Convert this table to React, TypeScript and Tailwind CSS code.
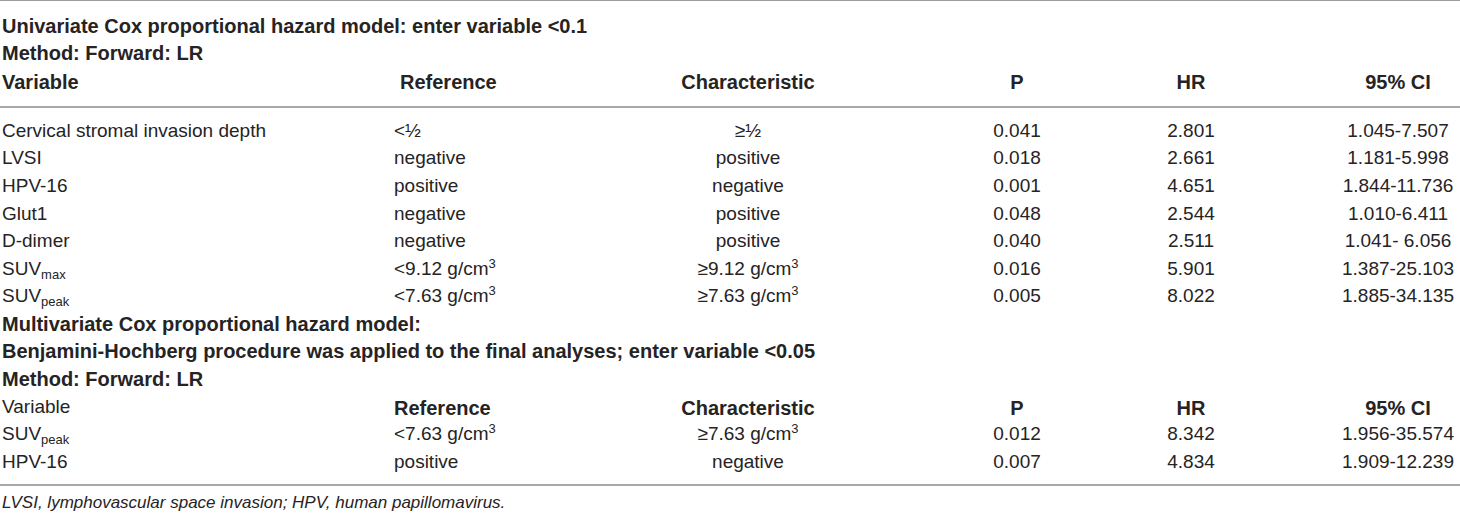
const font = { fontFamily: '"Liberation Sans", Arial, Helvetica, sans-serif' };

type Cell = React.ReactNode;

const cols = "grid grid-cols-[392px_114px_480px_58px_290px_124px] pl-[2px]";

function G({ children }: { children: React.ReactNode }) {
  return (
    <span className="whitespace-nowrap">
      {children}
      <sup className="text-[13px] relative -top-[7px]">3</sup>
    </span>
  );
}

function Suv({ sub }: { sub: string }) {
  return (
    <span>
      SUV<sub className="text-[13px] relative top-[4px]">{sub}</sub>
    </span>
  );
}

function Row({ cells, bold, boldFirst = true }: { cells: Cell[]; bold?: boolean; boldFirst?: boolean }) {
  const b = bold ? "font-bold text-[20px]" : "";
  return (
    <div className={`${cols} h-[27.6px] items-center`}>
      <div className={`whitespace-nowrap ${bold && boldFirst ? b : ""}`}>{cells[0]}</div>
      <div className={`whitespace-nowrap ${b}`}>{cells[1]}</div>
      <div className={`whitespace-nowrap text-center ${b}`}>{cells[2]}</div>
      <div className={`whitespace-nowrap text-center ${b}`}>{cells[3]}</div>
      <div className={`whitespace-nowrap text-center ${b}`}>{cells[4]}</div>
      <div className={`whitespace-nowrap text-center ${b}`}>{cells[5]}</div>
    </div>
  );
}

function Title({ children }: { children: React.ReactNode }) {
  return <div className="h-[27.6px] flex items-center pl-[2px] font-bold text-[20px] whitespace-nowrap">{children}</div>;
}

const univariate: Cell[][] = [
  ["Cervical stromal invasion depth", "<½", "≥½", "0.041", "2.801", "1.045-7.507"],
  ["LVSI", "negative", "positive", "0.018", "2.661", "1.181-5.998"],
  ["HPV-16", "positive", "negative", "0.001", "4.651", "1.844-11.736"],
  ["Glut1", "negative", "positive", "0.048", "2.544", "1.010-6.411"],
  ["D-dimer", "negative", "positive", "0.040", "2.511", "1.041- 6.056"],
  [<Suv sub="max" />, <G>{"<9.12 g/cm"}</G>, <G>{"≥9.12 g/cm"}</G>, "0.016", "5.901", "1.387-25.103"],
  [<Suv sub="peak" />, <G>{"<7.63 g/cm"}</G>, <G>{"≥7.63 g/cm"}</G>, "0.005", "8.022", "1.885-34.135"],
];

const multivariate: Cell[][] = [
  [<Suv sub="peak" />, <G>{"<7.63 g/cm"}</G>, <G>{"≥7.63 g/cm"}</G>, "0.012", "8.342", "1.956-35.574"],
  ["HPV-16", "positive", "negative", "0.007", "4.834", "1.909-12.239"],
];

export default function App() {
  return (
    <div className="w-[1460px] h-[515px] bg-white text-[#262324] text-[19px] overflow-hidden" style={font}>
      <div className="border-t border-[#9c9c9c] pt-[11px] pb-[11px] border-b-2 border-b-[#a8a8a8]">
        <Title>Univariate Cox proportional hazard model: enter variable &lt;0.1</Title>
        <Title>Method: Forward: LR</Title>
        <div className={`${cols} h-[27.6px] items-center font-bold text-[20px]`}>
          <div>Variable</div>
          <div className="pl-[6px]">Reference</div>
          <div className="text-center">Characteristic</div>
          <div className="text-center">P</div>
          <div className="text-center">HR</div>
          <div className="text-center">95% CI</div>
        </div>
      </div>
      <div className="pt-[9px] pb-[8px] border-b-2 border-[#a8a8a8]">
        {univariate.map((r, i) => (
          <Row key={i} cells={r} />
        ))}
        <Title>Multivariate Cox proportional hazard model:</Title>
        <Title>Benjamini-Hochberg procedure was applied to the final analyses; enter variable &lt;0.05</Title>
        <Title>Method: Forward: LR</Title>
        <Row cells={["Variable", "Reference", "Characteristic", "P", "HR", "95% CI"]} bold boldFirst={false} />
        {multivariate.map((r, i) => (
          <Row key={i} cells={r} />
        ))}
      </div>
      <div className="pl-[2px] pt-[4px] text-[17px] italic">
        LVSI, lymphovascular space invasion; HPV, human papillomavirus.
      </div>
    </div>
  );
}
